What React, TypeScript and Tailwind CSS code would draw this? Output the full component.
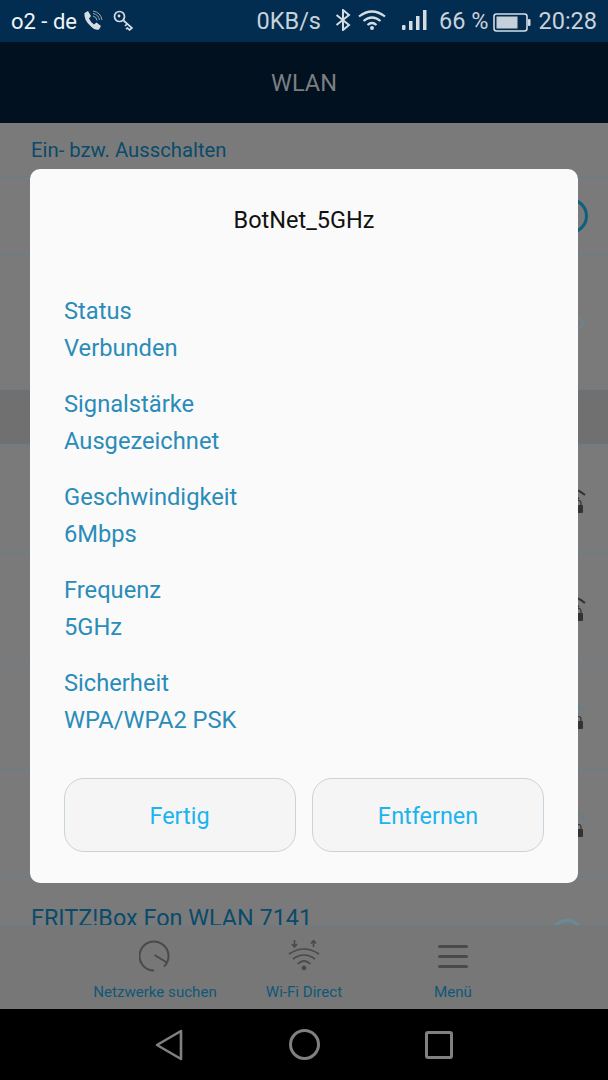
import React from "react";

const info = [
  ["Status", "Verbunden"],
  ["Signalstärke", "Ausgezeichnet"],
  ["Geschwindigkeit", "6Mbps"],
  ["Frequenz", "5GHz"],
  ["Sicherheit", "WPA/WPA2 PSK"],
];

function WifiLock({ dark }: { dark?: boolean }) {
  const stroke = dark ? "#333" : "#5f7f8f";
  return (
    <svg width="32" height="30" viewBox="0 0 32 30" fill="none" className="absolute right-[19px] top-[39px]">
      <path d="M2 3 Q16 1 28 11" stroke={stroke} strokeWidth="2" />
      <path d="M8 10 Q15 9 22 15" stroke={stroke} strokeWidth="2" />
      <rect x="17" y="21" width="9" height="8" rx="1" fill="#333" />
      <path d="M19 21 v-2 a2.5 2.5 0 0 1 5 0 v2" stroke="#333" strokeWidth="1.2" />
    </svg>
  );
}

function WifiRow({ dark }: { dark?: boolean }) {
  return (
    <div className="relative h-[108px] border-b border-[#6a7d86]">
      <WifiLock dark={dark} />
    </div>
  );
}

function StatusBar() {
  return (
    <div className="h-[42px] bg-[#022c50] flex items-center pl-[11px] pr-[11px] pt-[1px] text-[23.5px] leading-none text-[#c8d2da]">
      <span className="text-[22px] text-[#f0f4f6]">o2 - de</span>
      <svg width="20" height="21" viewBox="0 0 20 21" fill="none" className="ml-[6px] mb-[3px]">
        <path d="M1.5 3 L5 1 L8 6 L6 8.5 Q7.5 12 11 14.5 L13.5 12.5 L18 16 L16 19.5 Q12.5 21 7.5 16 Q0.5 9.5 1.5 3 Z" fill="#d5dde3" />
        <path d="M10 6 A5 5 0 0 1 14 10.5 M10 3.5 A8 8 0 0 1 16.5 10 M10 1 A11 11 0 0 1 19 10" stroke="#a9b6c0" strokeWidth="0.9" />
      </svg>
      <svg width="20" height="21" viewBox="0 0 20 21" fill="none" className="ml-[10px] mb-[3px]">
        <circle cx="6.5" cy="6.5" r="5" stroke="#d5dde3" strokeWidth="1.7" />
        <circle cx="6" cy="6" r="1.4" fill="#d5dde3" />
        <path d="M10.5 10.5 L19 18 L16.5 20 L14.5 18 L13 19 M14 14 L12 16" stroke="#d5dde3" strokeWidth="1.7" />
      </svg>
      <span className="ml-auto">0KB/s</span>
      <svg width="16" height="22" viewBox="0 0 16 22" fill="none" className="ml-[14px] mb-[3px]">
        <path d="M1.5 6 L14 16 L8 21 V1 L14 6 L1.5 16" stroke="#d5dde3" strokeWidth="2" />
      </svg>
      <svg width="28" height="22" viewBox="0 0 28 22" fill="none" className="ml-[7px] mb-[3px]">
        <path d="M1 7.5 Q14 -2.5 27 7.5 M5.5 12 Q14 5 22.5 12 M9.5 16 Q14 12 18.5 16" stroke="#d5dde3" strokeWidth="2.2" />
        <circle cx="14" cy="19" r="2" fill="#d5dde3" />
      </svg>
      <svg width="25" height="22" viewBox="0 0 25 22" className="ml-[16px] mb-[3px]">
        <rect x="0" y="16" width="3.5" height="5" rx="1" fill="#d5dde3" />
        <rect x="7" y="12" width="3.5" height="9" fill="#d5dde3" />
        <rect x="14" y="7" width="3.5" height="14" fill="#d5dde3" />
        <rect x="21" y="1" width="3.5" height="20" fill="#d5dde3" />
      </svg>
      <span className="ml-[12px]">66 %</span>
      <svg width="38" height="20" viewBox="0 0 38 20" fill="none" className="ml-[5px]">
        <rect x="1" y="2" width="33" height="17" rx="2.5" stroke="#d5dde3" strokeWidth="1.6" />
        <rect x="3.5" y="4.5" width="21" height="12" fill="#c5d0da" />
        <rect x="35" y="7" width="2.5" height="7" rx="1" fill="#d5dde3" />
      </svg>
      <span className="ml-[7px]">20:28</span>
    </div>
  );
}

function BottomItem({ label, children }: { label: string; children: React.ReactNode }) {
  return (
    <div className="w-[149px] flex flex-col items-center">
      <div className="h-[38px] flex items-center justify-center">{children}</div>
      <span className="mt-[8px] text-[15.1px] leading-[18px] text-[#0f5878]">{label}</span>
    </div>
  );
}

export default function App() {
  return (
    <div className="relative w-[608px] h-[1080px] overflow-hidden bg-[#7a7a7a] font-['Roboto',sans-serif]">
      <StatusBar />
      <div className="h-[81px] bg-[#01111f] flex items-center justify-center pt-[2px] text-[23.5px] text-[#7c7f82]">WLAN</div>

      <div className="h-[802px] overflow-hidden">
        <div className="h-[54px] border-b border-[#6a7d86] pl-[31px] pt-[14px] text-[20.3px] leading-[26px] text-[#0a4a6a]">
          Ein- bzw. Ausschalten
        </div>
        <div className="relative h-[79px] border-b border-[#6a7d86]">
          <div className="absolute right-[20px] top-[21px] w-[36px] h-[36px] rounded-full border-[3px] border-[#0c5f80]" />
        </div>
        <div className="relative h-[134px] border-b border-[#6a7d86]">
          <svg width="10" height="18" viewBox="0 0 10 18" fill="none" className="absolute right-[22px] top-[58px]">
            <path d="M1 1 L8 9 L1 17" stroke="#6a8592" strokeWidth="1.5" />
          </svg>
        </div>
        <div className="h-[55px] bg-[#707070] border-b border-[#6a7d86]" />
        <WifiRow dark />
        <WifiRow dark />
        <WifiRow />
        <WifiRow />
        <div className="relative pl-[31px] pt-[26px] text-[23.4px] leading-[30px] text-[#0a4a6a]">
          FRITZ!Box Fon WLAN 7141
          <div className="absolute right-[23px] top-[42px] w-[36px] h-[36px] rounded-full border-[3px] border-[#6a8a98]" />
        </div>
      </div>

      <div className="absolute left-0 right-0 top-[925px] h-[84px] bg-[#777777] border-t border-[#6a7d86] flex justify-center pt-[11px]">
        <BottomItem label="Netzwerke suchen">
          <svg width="32" height="32" viewBox="0 0 32 32" fill="none">
            <path d="M25 26.5 A14.5 14.5 0 1 0 15 30.5 M15.5 15 L27 22" stroke="#4a4a4a" strokeWidth="2" />
          </svg>
        </BottomItem>
        <BottomItem label="Wi-Fi Direct">
          <svg width="32" height="32" viewBox="0 0 32 32" fill="none">
            <path d="M1 14 Q16 4 31 14 M5 19 Q16 11 27 19 M9.5 24 Q16 18 22.5 24" stroke="#4a4a4a" strokeWidth="1.7" />
            <circle cx="16" cy="28" r="2.4" fill="#4a4a4a" />
            <path d="M6.5 0 V6 M4 4 L6.5 7 L9 4 M25.5 7 V1 M23 3.5 L25.5 0.5 L28 3.5" stroke="#4a4a4a" strokeWidth="1.6" />
          </svg>
        </BottomItem>
        <BottomItem label="Menü">
          <div className="flex flex-col gap-[7px]">
            <div className="w-[30px] h-[3px] rounded-full bg-[#4a4a4a]" />
            <div className="w-[30px] h-[3px] rounded-full bg-[#4a4a4a]" />
            <div className="w-[30px] h-[3px] rounded-full bg-[#4a4a4a]" />
          </div>
        </BottomItem>
      </div>

      <div className="absolute left-0 right-0 top-[1009px] h-[71px] bg-black flex items-center justify-center">
        <svg width="28" height="32" viewBox="0 0 28 32" fill="none">
          <path d="M26 2 V30 L2 16 Z" stroke="#808080" strokeWidth="2.6" strokeLinejoin="round" />
        </svg>
        <div className="ml-[106px] w-[31px] h-[31px] rounded-full border-[3px] border-[#808080]" />
        <div className="ml-[105px] w-[28px] h-[28px] rounded-[3px] border-[3px] border-[#808080]" />
      </div>

      {/* dialog */}
      <div className="absolute left-[30px] top-[169px] w-[548px] h-[714px] rounded-[10px] bg-[#fafafa] px-[34px]">
        <div className="pt-[36px] text-center text-[23.5px] leading-[30px] text-[#111111]">BotNet_5GHz</div>
        <div className="mt-[61px] flex flex-col gap-[26px]">
          {info.map(([label, value]) => (
            <div key={label} className="flex flex-col gap-[7px] text-[23.7px] leading-[30px] text-[#2a8cb8]">
              <span>{label}</span>
              <span>{value}</span>
            </div>
          ))}
        </div>
        <div className="mt-[43px] flex gap-[16px]">
          <button className="w-[232px] h-[74px] pt-[3px] pr-[1px] rounded-[20px] border border-[#c8d3da] bg-[#f5f5f5] text-[23.4px] text-[#1cb4ee]">Fertig</button>
          <button className="w-[232px] h-[74px] pt-[3px] rounded-[20px] border border-[#c8d3da] bg-[#f5f5f5] text-[23.4px] text-[#1cb4ee]">Entfernen</button>
        </div>
      </div>
    </div>
  );
}
